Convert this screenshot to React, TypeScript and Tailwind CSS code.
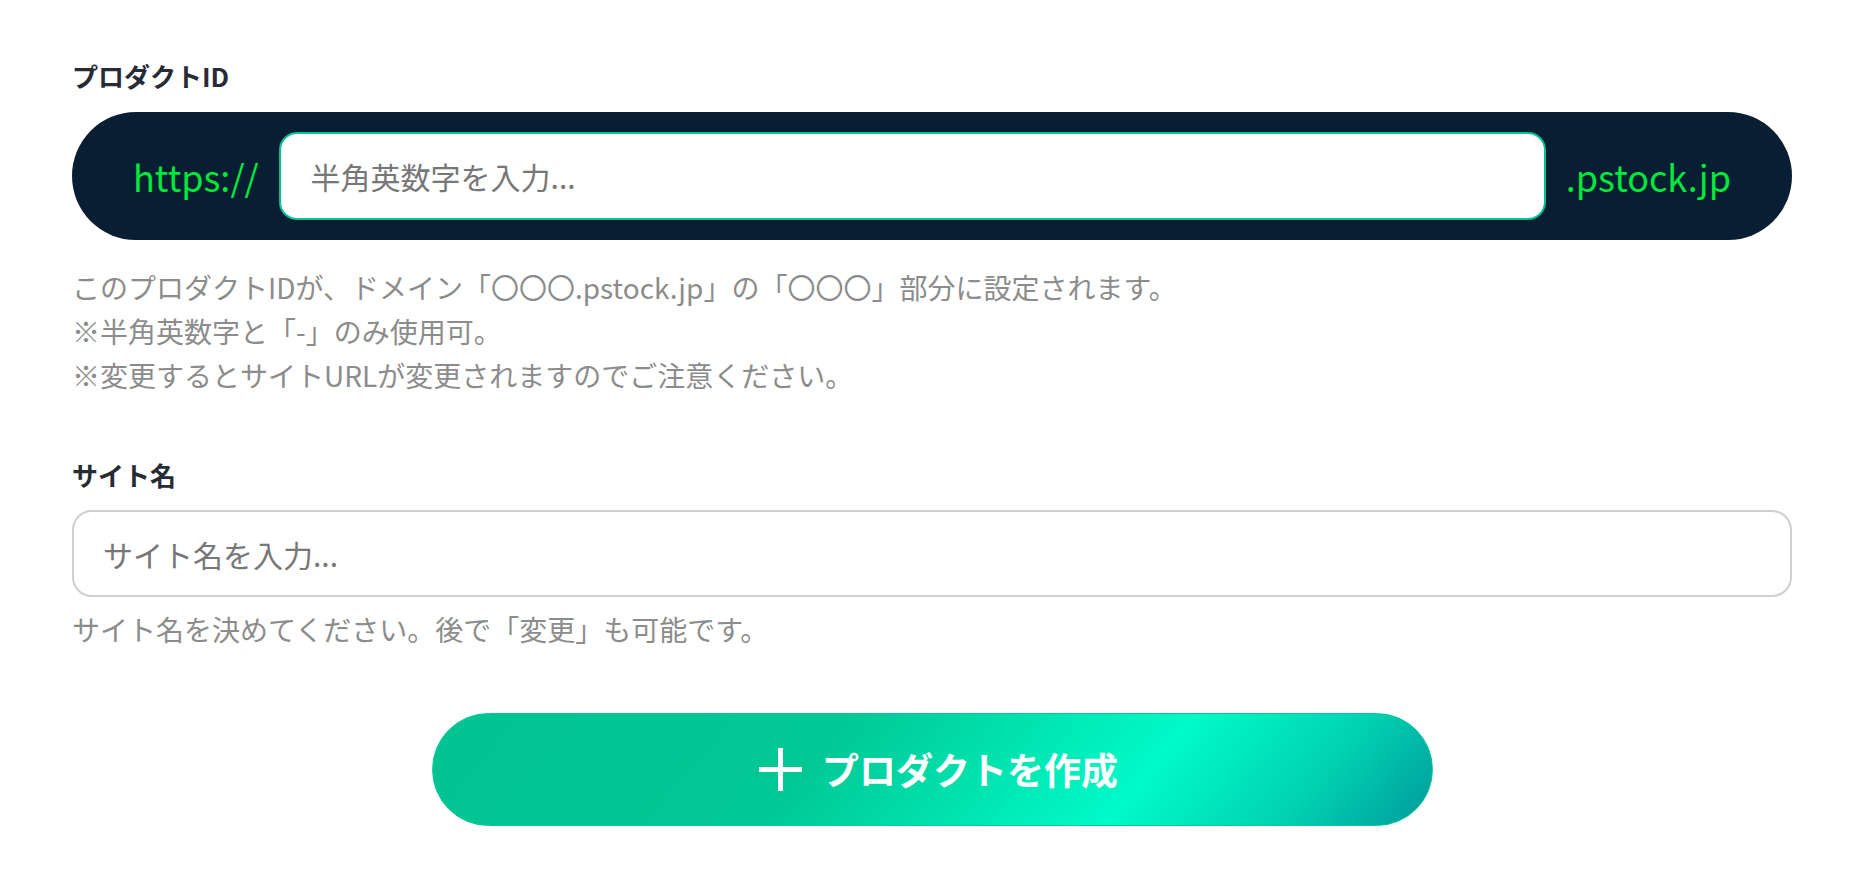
import { useState } from "react";

export default function App() {
  const [productId, setProductId] = useState("");
  const [siteName, setSiteName] = useState("");

  return (
    <main className="min-h-screen bg-white px-[72px] pt-[58px] font-['Noto_Sans_CJK_JP','Noto_Sans',sans-serif]">
      {/* プロダクトID */}
      <label className="block text-[26px] leading-[36px] font-bold text-[#262b36]">プロダクトID</label>
      <div className="mt-[18px] flex h-[128px] items-center gap-[20px] rounded-full bg-[#081e33] px-[61px]">
        <span className="text-[36px] leading-none text-[#00e83c]">https://</span>
        <input
          type="text"
          value={productId}
          onChange={(e) => setProductId(e.target.value)}
          placeholder="半角英数字を入力..."
          className="h-[88px] min-w-0 flex-1 rounded-[18px] border-2 border-[#00c290] bg-white px-[30px] text-[30px] text-[#333] outline-none placeholder:text-[#777]"
        />
        <span className="text-[36px] leading-none text-[#00e83c]">.pstock.jp</span>
      </div>
      <div className="mt-[25px] text-[28px] leading-[44px] text-[#8c8c8c]">
        <p>このプロダクトIDが、ドメイン「〇〇〇.pstock.jp」の「〇〇〇」部分に設定されます。</p>
        <p>※半角英数字と「-」のみ使用可。</p>
        <p>※変更するとサイトURLが変更されますのでご注意ください。</p>
      </div>

      {/* サイト名 */}
      <label className="mt-[60px] block text-[26px] leading-[36px] font-bold text-[#262b36]">サイト名</label>
      <input
        type="text"
        value={siteName}
        onChange={(e) => setSiteName(e.target.value)}
        placeholder="サイト名を入力..."
        className="mt-[17px] block h-[87px] w-full rounded-[20px] border-2 border-[#cfcfcf] bg-white px-[29px] text-[30px] text-[#333] outline-none placeholder:text-[#777]"
      />
      <p className="mt-[10px] text-[28px] leading-[44px] text-[#8c8c8c]">サイト名を決めてください。後で「変更」も可能です。</p>

      {/* 作成ボタン */}
      <div className="mt-[62px] flex justify-center">
        <button
          type="button"
          className="flex h-[113px] w-[1001px] items-center justify-center gap-[20px] rounded-full border border-[#00c896] bg-[linear-gradient(130deg,#02c392_0%,#00c894_38%,#00fac8_70%,#00d2b2_86%,#009a9a_100%)] pl-[13px] text-[37px] font-bold text-white"
        >
          <svg width="43" height="43" viewBox="0 0 43 43" fill="none">
            <path d="M21.5 0v43M0 21.5h43" stroke="white" strokeWidth="5" />
          </svg>
          <span>プロダクトを作成</span>
        </button>
      </div>
    </main>
  );
}
